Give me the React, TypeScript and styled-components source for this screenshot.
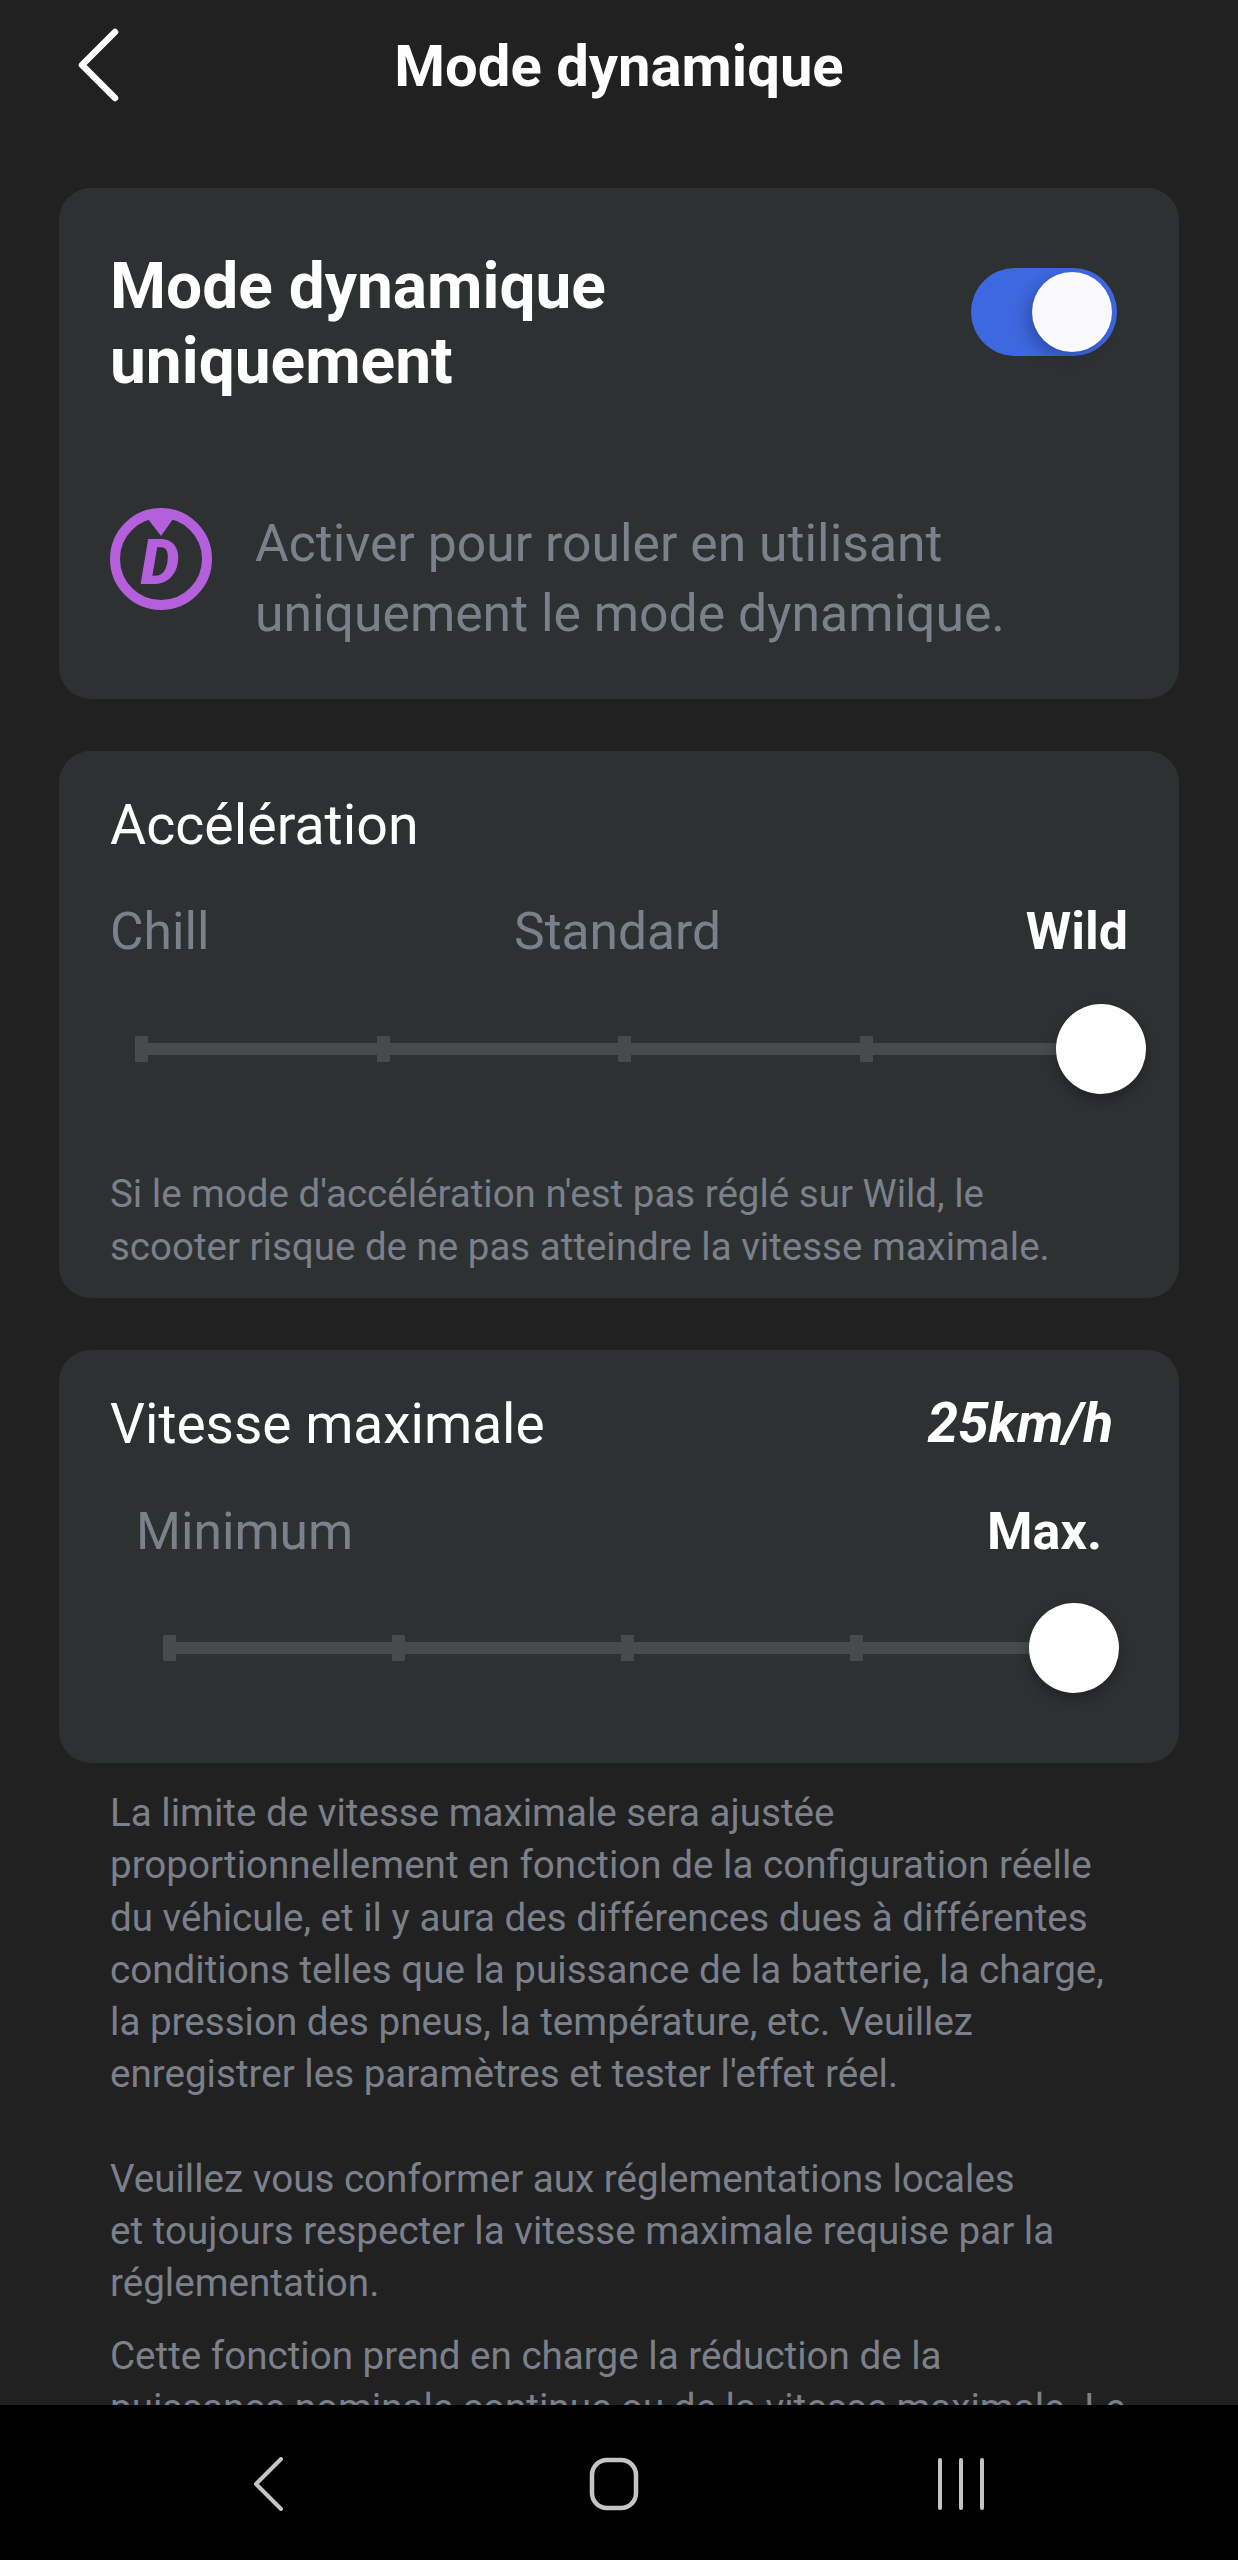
import React from 'react'
import styled, { createGlobalStyle } from 'styled-components'

const GlobalStyle = createGlobalStyle`
  html, body {
    margin: 0;
    padding: 0;
    background: #212121;
  }
  * {
    box-sizing: border-box;
  }
`

const TICKS = [0, 1, 2, 3]

function Slider({ variant }: { variant: 'wide' | 'narrow' }) {
  return (
    <SliderRow $variant={variant}>
      <Track>
        {TICKS.map((t) => (
          <Tick key={t} $variant={variant} />
        ))}
      </Track>
      <Thumb />
    </SliderRow>
  )
}

function App() {
  return (
    <Screen>
      <GlobalStyle />
      <Scroll>
        <Header>
          <BackButton>
            <svg width="44" height="74" viewBox="0 0 44 74" fill="none">
              <path d="M39 4 L6 37 L39 70" stroke="#fff" strokeWidth="6.5" strokeLinecap="round" strokeLinejoin="round" />
            </svg>
          </BackButton>
          <HeaderTitle>Mode dynamique</HeaderTitle>
        </Header>

        <ModeCard>
          <ModeTop>
            <ModeTitle>Mode dynamique<br />uniquement</ModeTitle>
            <Toggle><Knob /></Toggle>
          </ModeTop>
          <ModeInfo>
            <svg width="104" height="104" viewBox="0 0 104 104">
              <circle cx="52" cy="52" r="46" fill="none" stroke="#b45fdc" strokeWidth="10" />
              <polygon points="36,6 68,6 64,12 52,29 39,12" fill="#b45fdc" />
              <text x="51" y="77" textAnchor="middle" fontFamily="Roboto, sans-serif" fontWeight="900" fontStyle="italic" fontSize="62" fill="#b45fdc">D</text>
            </svg>
            <ModeText>Activer pour rouler en utilisant<br />uniquement le mode dynamique.</ModeText>
          </ModeInfo>
        </ModeCard>

        <AccelCard>
          <CardTitle>Accélération</CardTitle>
          <Labels $variant="wide">
            <Dim>Chill</Dim>
            <Dim>Standard</Dim>
            <Strong>Wild</Strong>
          </Labels>
          <Slider variant="wide" />
          <CardNote>
            Si le mode d'accélération n'est pas réglé sur Wild, le<br />
            scooter risque de ne pas atteindre la vitesse maximale.
          </CardNote>
        </AccelCard>

        <SpeedCard>
          <SpeedHead>
            <SpeedTitle>Vitesse maximale</SpeedTitle>
            <SpeedValue>25km/h</SpeedValue>
          </SpeedHead>
          <Labels $variant="narrow">
            <Dim>Minimum</Dim>
            <Strong>Max.</Strong>
          </Labels>
          <Slider variant="narrow" />
        </SpeedCard>

        <Notes>
          <Para>
            La limite de vitesse maximale sera ajustée<br />
            proportionnellement en fonction de la configuration réelle<br />
            du véhicule, et il y aura des différences dues à différentes<br />
            conditions telles que la puissance de la batterie, la charge,<br />
            la pression des pneus, la température, etc. Veuillez<br />
            enregistrer les paramètres et tester l'effet réel.
          </Para>
          <Para>
            Veuillez vous conformer aux réglementations locales<br />
            et toujours respecter la vitesse maximale requise par la<br />
            réglementation.
          </Para>
          <LastPara>
            Cette fonction prend en charge la réduction de la<br />
            puissance nominale continue ou de la vitesse maximale. Le
          </LastPara>
        </Notes>
      </Scroll>

      <NavBar>
        <svg width="34" height="54" viewBox="0 0 34 54" fill="none">
          <path d="M30 2 L5 27 L30 52" stroke="#c4c4c4" strokeWidth="4" strokeLinecap="round" strokeLinejoin="round" />
        </svg>
        <svg width="50" height="54" viewBox="0 0 50 54" fill="none">
          <rect x="3" y="3" width="44" height="48" rx="15" stroke="#c4c4c4" strokeWidth="4.5" />
        </svg>
        <svg width="50" height="52" viewBox="0 0 50 52" fill="none">
          <path d="M4 2 V50 M25 2 V50 M46 2 V50" stroke="#c4c4c4" strokeWidth="4" strokeLinecap="round" />
        </svg>
      </NavBar>
    </Screen>
  )
}

export default App

const Screen = styled.div`
  width: 1238px;
  height: 2560px;
  display: flex;
  flex-direction: column;
  background: #212121;
  font-family: Roboto, 'Liberation Sans', sans-serif;
  overflow: hidden;
`

const Scroll = styled.div`
  height: 2405px;
  padding: 0 59px;
  overflow: hidden;
`

const Header = styled.div`
  position: relative;
  height: 188px;
  padding-top: 28px;
  display: flex;
  justify-content: center;
`

const BackButton = styled.div`
  position: absolute;
  left: 17px;
  top: 28px;
  line-height: 0;
`

const HeaderTitle = styled.div`
  color: #fff;
  font-size: 58px;
  font-weight: 700;
  line-height: 76px;
`

const Card = styled.section`
  background: #2e3132;
  border-radius: 32px;
  padding-left: 51px;
  padding-right: 51px;
`

const ModeCard = styled(Card)`
  height: 511px;
  padding-top: 61px;
`

const ModeTop = styled.div`
  display: flex;
  justify-content: space-between;
`

const ModeTitle = styled.div`
  color: #fff;
  font-size: 64px;
  font-weight: 700;
  line-height: 75px;
`

const Toggle = styled.div`
  width: 146px;
  height: 88px;
  margin: 19px 11px 0 0;
  padding: 4px 5px;
  display: flex;
  justify-content: flex-end;
  border-radius: 44px;
  background: #3e68e0;
`

const Knob = styled.div`
  width: 80px;
  height: 80px;
  border-radius: 50%;
  background: #f9f9fb;
  box-shadow: -6px 6px 14px rgba(20, 30, 70, 0.3);
`

const ModeInfo = styled.div`
  margin-top: 110px;
  margin-left: -1px;
  display: flex;
  align-items: flex-start;
  gap: 42px;

  svg {
    margin-top: -2px;
    flex: none;
  }
`

const ModeText = styled.div`
  color: #7b808a;
  font-size: 51.7px;
  line-height: 70px;
`

const AccelCard = styled(Card)`
  height: 547px;
  margin-top: 52px;
  padding-top: 40px;
`

const CardTitle = styled.div`
  color: #fff;
  font-size: 55.5px;
  line-height: 70px;
`

const SpeedTitle = styled(CardTitle)`
  font-size: 55px;
  padding-top: 1px;
`

const Labels = styled.div<{ $variant: 'wide' | 'narrow' }>`
  display: flex;
  justify-content: space-between;
  margin-top: ${(p) => (p.$variant === 'narrow' ? '38px' : '36px')};
  padding: 0 ${(p) => (p.$variant === 'narrow' ? '26px' : '0')};
`

const Dim = styled.span`
  color: #7b808a;
  font-size: 51.5px;
  line-height: 70px;
`

const Strong = styled.span`
  color: #fff;
  font-size: 52px;
  font-weight: 700;
  line-height: 70px;
`

const SliderRow = styled.div<{ $variant: 'wide' | 'narrow' }>`
  position: relative;
  height: 90px;
  margin-top: ${(p) => (p.$variant === 'wide' ? '37px' : '36px')};
  margin-left: ${(p) => (p.$variant === 'wide' ? '25px' : '53px')};
  margin-right: ${(p) => (p.$variant === 'wide' ? '-18px' : '9px')};
  display: flex;
  align-items: center;
`

const Track = styled.div`
  flex: 1;
  height: 12px;
  background: #474b4e;
  display: flex;
  align-items: center;
`

const Tick = styled.i<{ $variant: 'wide' | 'narrow' }>`
  display: block;
  flex: 0 0 ${(p) => (p.$variant === 'wide' ? '241.5px' : '229px')};
  height: 26px;
  background: linear-gradient(#474b4e, #474b4e) left top / 13px 26px no-repeat;
`

const Thumb = styled.div`
  position: absolute;
  right: 0;
  top: 0;
  width: 90px;
  height: 90px;
  border-radius: 50%;
  background: #fff;
  box-shadow: 0 6px 14px rgba(0, 0, 0, 0.3);
`

const CardNote = styled.div`
  margin-top: 73px;
  color: #7b808a;
  font-size: 38.5px;
  line-height: 53px;
`

const SpeedCard = styled(Card)`
  height: 413px;
  margin-top: 52px;
  padding-top: 38px;
`

const SpeedHead = styled.div`
  display: flex;
  justify-content: space-between;
  padding-right: 15px;
`

const SpeedValue = styled.div`
  color: #fff;
  font-size: 55px;
  font-weight: 700;
  font-style: italic;
  line-height: 70px;
`

const Notes = styled.div`
  padding: 24px 51px 0;
  color: #7b808a;
  font-size: 38.6px;
  line-height: 52.3px;
`

const Para = styled.p`
  margin: 0 0 52px;
`

const LastPara = styled.p`
  margin: -32px 0 0;
  white-space: nowrap;
`

const NavBar = styled.div`
  height: 155px;
  padding: 2px 0 0 251px;
  background: #000;
  display: grid;
  grid-template-columns: 338px 347px auto;
  align-items: center;
`
